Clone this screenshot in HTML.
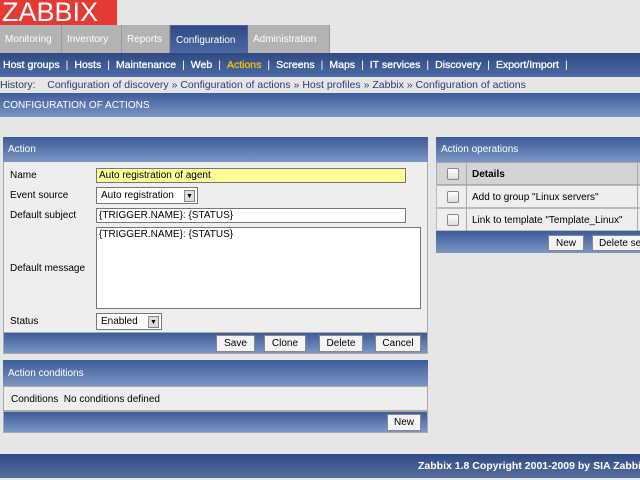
<!DOCTYPE html>
<html><head><meta charset="utf-8"><style>
*{margin:0;padding:0;box-sizing:border-box}
body{width:640px;height:480px;background:#e6e6e6;font-family:"Liberation Sans",sans-serif;font-size:11px;position:relative;overflow:hidden;color:#000}
.a{position:absolute}
.blue{background:linear-gradient(#3d5d99,#7b96c4)}
.tab{position:absolute;top:25px;height:28px;background:#b3b3b3;color:#fff;font-size:10px;line-height:29px;padding-left:5px;border-right:1px solid #999}
.sub{position:absolute;top:53px;height:24px;left:0;width:640px;background:linear-gradient(#2f4a82,#4b6aa6);color:#fff;font-size:10.5px;line-height:24px;padding-left:3px;white-space:nowrap;-webkit-text-stroke:0.3px #fff}
.sub span.s{margin:0 6px;-webkit-text-stroke:0}
.hdr{color:#fff;font-size:10px;padding-left:5px;line-height:26px}
.lbl{position:absolute;left:10px;font-size:10px}
.inp{position:absolute;background:#fff;border:1px solid #777;font-size:10px;padding-left:2px;line-height:13px}
.btn{position:absolute;background:#f4f4f4;border:1px solid #888;font-size:10px;text-align:center;line-height:15px}
.sel{position:absolute;background:#fff;border:1px solid #777;font-size:10px;line-height:15px;padding-left:4px}
.sel i{position:absolute;right:2px;top:2px;width:11px;height:12px;background:#ddd;border:1px solid #888;font-style:normal;font-size:7px;text-align:center;line-height:11px}
.cb{position:absolute;width:12px;height:12px;border:1px solid #888;border-radius:2px;background:linear-gradient(#fff,#ddd);left:10px}
</style></head><body>
<div class="a" style="left:0;top:0;width:117px;height:25px;background:#e53a33;color:#fff;font-size:27px;line-height:25px;padding-left:2px">ZABBIX</div>
<div class="a" style="left:0;top:25px;width:640px;height:28px;background:#e6e6e6"></div>
<div class="tab" style="left:0;width:62px">Monitoring</div>
<div class="tab" style="left:62px;width:60px">Inventory</div>
<div class="tab" style="left:122px;width:48px">Reports</div>
<div class="tab" style="left:170px;width:78px;background:linear-gradient(#2f4a82,#4b6aa6);border:1px solid #5a5aa0;border-bottom:none">Configuration</div>
<div class="tab" style="left:248px;width:82px">Administration</div>
<div class="sub">Host groups<span class="s">|</span>Hosts<span class="s">|</span>Maintenance<span class="s">|</span>Web<span class="s">|</span><span style="color:#f2c200;-webkit-text-stroke:0.3px #f2c200">Actions</span><span class="s">|</span>Screens<span class="s">|</span>Maps<span class="s">|</span>IT services<span class="s">|</span>Discovery<span class="s">|</span>Export/Import<span class="s">|</span></div>
<div class="a" style="top:77px;left:0;height:16px;line-height:17px;font-size:10.5px;color:#333388;white-space:nowrap"><span style="color:#333366">History:</span>&nbsp;&nbsp;&nbsp; Configuration of discovery » Configuration of actions » Host profiles » Zabbix » Configuration of actions</div>
<div class="a blue hdr" style="top:93px;left:0;width:640px;height:24px;padding-left:3px;line-height:25px">CONFIGURATION OF ACTIONS</div>

<div class="a" style="left:3px;top:137px;width:425px;height:217px;border:1px solid #aaa;background:#eee"></div>
<div class="a blue hdr" style="left:3px;top:137px;width:425px;height:25px">Action</div>
<div class="lbl" style="top:170px">Name</div>
<div class="inp" style="left:96px;top:168px;width:310px;height:15px;background:#ffff99">Auto registration of agent</div>
<div class="lbl" style="top:190px">Event source</div>
<div class="sel" style="left:96px;top:187px;width:102px;height:17px">Auto registration<i>▼</i></div>
<div class="lbl" style="top:210px">Default subject</div>
<div class="inp" style="left:96px;top:208px;width:310px;height:15px">{TRIGGER.NAME}: {STATUS}</div>
<div class="lbl" style="top:263px">Default message</div>
<div class="inp" style="left:96px;top:227px;width:325px;height:82px">{TRIGGER.NAME}: {STATUS}</div>
<div class="lbl" style="top:316px">Status</div>
<div class="sel" style="left:96px;top:313px;width:66px;height:17px">Enabled<i>▼</i></div>
<div class="a blue" style="left:3px;top:332px;width:425px;height:22px;border:1px solid #aaa"></div>
<div class="btn" style="left:216px;top:335px;width:39px;height:17px">Save</div>
<div class="btn" style="left:264px;top:335px;width:42px;height:17px">Clone</div>
<div class="btn" style="left:319px;top:335px;width:44px;height:17px">Delete</div>
<div class="btn" style="left:375px;top:335px;width:46px;height:17px">Cancel</div>

<div class="a blue hdr" style="left:3px;top:360px;width:425px;height:26px;line-height:27px">Action conditions</div>
<div class="a" style="left:3px;top:386px;width:425px;height:25px;border:1px solid #aaa;background:#eee;font-size:10px;line-height:25px;padding-left:7px">Conditions&nbsp; No conditions defined</div>
<div class="a blue" style="left:3px;top:411px;width:425px;height:22px;border:1px solid #aaa"></div>
<div class="btn" style="left:387px;top:414px;width:34px;height:17px">New</div>

<div class="a" style="left:436px;top:137px;width:210px;height:116px;border:1px solid #aaa;background:#eee"></div>
<div class="a blue hdr" style="left:436px;top:137px;width:210px;height:25px">Action operations</div>
<div class="a" style="left:436px;top:162px;width:210px;height:23px;background:#d4d4d4;border:1px solid #aaa"><div class="cb" style="top:5px"></div><b class="a" style="left:35px;top:6px;font-size:10px">Details</b></div>
<div class="a" style="left:436px;top:185px;width:210px;height:23px;background:#eee;border:1px solid #bbb"><div class="cb" style="top:5px"></div><span class="a" style="left:35px;top:6px;font-size:10px">Add to group "Linux servers"</span></div>
<div class="a" style="left:436px;top:208px;width:210px;height:23px;background:#eee;border:1px solid #bbb"><div class="cb" style="top:5px"></div><span class="a" style="left:35px;top:6px;font-size:10px">Link to template "Template_Linux"</span></div>
<div class="a" style="left:466px;top:162px;width:1px;height:69px;background:#aaa"></div>
<div class="a" style="left:637px;top:162px;width:1px;height:69px;background:#aaa"></div>
<div class="a blue" style="left:436px;top:231px;width:210px;height:22px"></div>
<div class="btn" style="left:548px;top:235px;width:36px;height:16px">New</div>
<div class="btn" style="left:592px;top:235px;width:60px;height:16px;text-align:left;padding-left:6px;white-space:nowrap;overflow:hidden">Delete selected</div>

<div class="a" style="left:0;top:454px;width:640px;height:24px;background:linear-gradient(#2f4a82,#58709f);color:#fff;font-weight:bold;font-size:10.5px;line-height:25px;white-space:nowrap;overflow:hidden"><span class="a" style="left:418px">Zabbix 1.8 Copyright 2001-2009 by SIA Zabbix</span></div>
</body></html>
